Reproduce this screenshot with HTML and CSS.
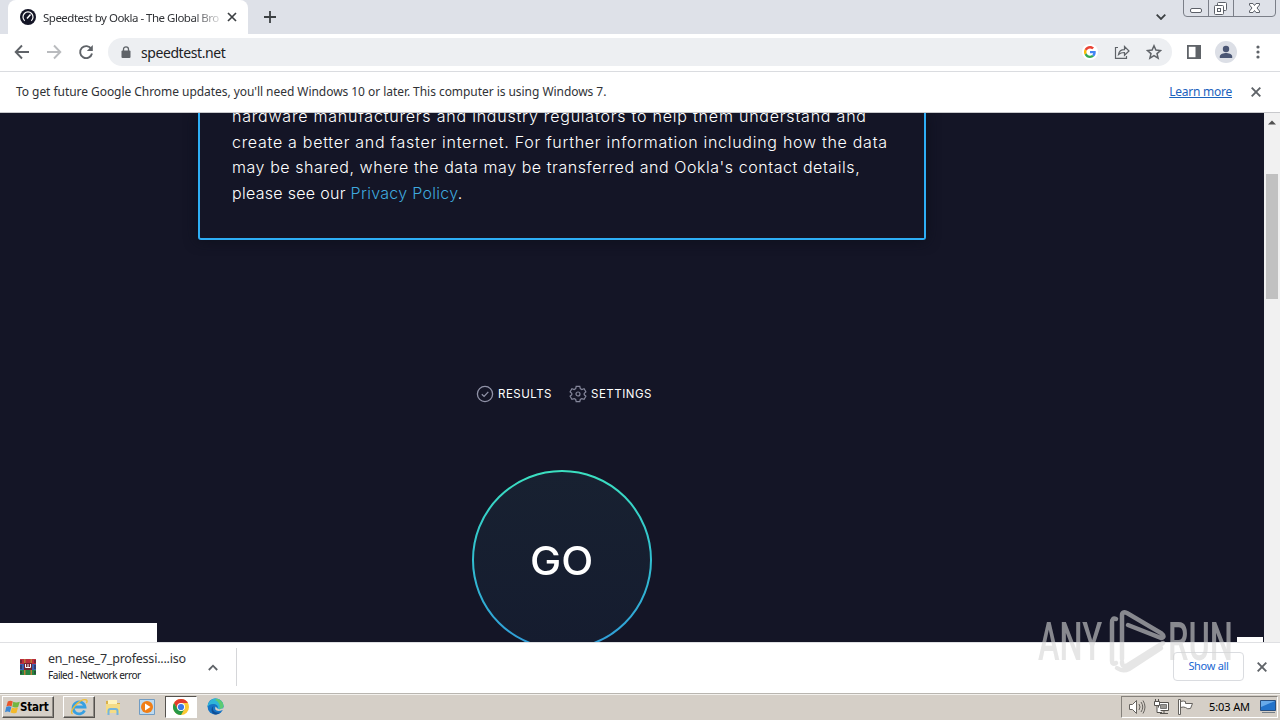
FILE: index.html
```
<!DOCTYPE html>
<html lang="en">
<head>
    <meta charset="UTF-8">
    <meta name="viewport" content="width=device-width, initial-scale=1.0">
    <title>Speedtest by Ookla</title>
    <link rel="stylesheet" href="styles.css">
</head>
<body>
    <!-- Tab strip -->
    <div class="tabstrip">
        <div class="tab">
            <svg class="favicon" width="16" height="16" viewBox="0 0 16 16">
                <circle cx="8" cy="8" r="8" fill="#141526"/>
                <path d="M4.700 11.700a5 5 0 1 1 6.600 0" fill="none" stroke="#fff" stroke-width="1.200"/>
                <path d="M7 9.500l3.500-4" stroke="#fff" stroke-width="1.500"/>
            </svg>
            <span class="tab-title">Speedtest by Ookla - The Global Bro</span>
            <svg width="10" height="10" viewBox="0 0 10 10"><path d="M1 1l8 8M9 1l-8 8" stroke="#3c4043" stroke-width="1.700"/></svg>
        </div>
        <svg class="new-tab" width="12" height="12" viewBox="0 0 12 12"><path d="M6 0v12M0 6h12" stroke="#3c4043" stroke-width="1.800"/></svg>
        <svg class="tab-search" width="10" height="6" viewBox="0 0 10 6"><path d="M.7.7L5 5 9.300.7" fill="none" stroke="#3c4043" stroke-width="1.800"/></svg>
        <div class="win-buttons">
            <svg width="97" height="17" viewBox="0 0 97 17" fill="none" stroke="#7b7f88">
                <path d="M.5 0v13q0 3.500 3.500 3.500h85q3.500 0 3.500-3.500V0M25.500 0v16.500M50.500 0v16.500"/>
                <g stroke="#5c6068">
                    <rect x="7.500" y="8.500" width="11" height="4" rx="1.500" fill="#fff"/>
                    <rect x="34.500" y="2.500" width="9" height="8" rx="1" fill="#fff"/>
                    <rect x="31.500" y="5.500" width="9" height="9" rx="1" fill="#fff"/>
                    <rect x="34.500" y="8.500" width="3" height="3"/>
                    <path d="M66.500 3.500h3.500l1.500 2 1.500-2h3.500v1.500L74 8l2.500 3v1.500H73l-1.500-2-1.500 2h-3.500V11L69 8l-2.500-3z" fill="#fff"/>
                </g>
            </svg>
        </div>
    </div>

    <!-- Toolbar -->
    <div class="toolbar">
        <svg class="nav-icon" width="16" height="16" viewBox="0 0 16 16" fill="none" stroke="#5f6368" stroke-width="1.900"><path d="M15 8H2M8 1.500L1.700 8 8 14.500"/></svg>
        <svg class="nav-icon" width="16" height="16" viewBox="0 0 16 16" fill="none" stroke="#b9bbbe" stroke-width="1.900"><path d="M1 8h13M8 1.500L14.300 8 8 14.500"/></svg>
        <svg class="nav-icon" width="16" height="16" viewBox="0 0 16 16"><path d="M13.300 5A6 6 0 1 0 14 9.500" fill="none" stroke="#5f6368" stroke-width="1.900"/><path d="M14.800 1v6H8.800z" fill="#5f6368"/></svg>
        <div class="omnibox">
            <svg width="10" height="13" viewBox="0 0 10 13"><rect x=".5" y="4.500" width="9" height="7.500" rx="1" fill="#5f6368"/><path d="M2.500 5V3.300a2.500 2.500 0 0 1 5 0V5" fill="none" stroke="#5f6368" stroke-width="1.300"/></svg>
            <span class="url">speedtest.net</span>
            <div class="omni-icons">
                <span class="google">
                    <svg width="12" height="12" viewBox="0 0 48 48">
                        <path fill="#ea4335" d="M24 9.500c3.500 0 6.700 1.200 9.200 3.600l6.900-6.900C35.900 2.400 30.500 0 24 0 14.600 0 6.500 5.400 2.600 13.200l8 6.200C12.400 13.700 17.700 9.500 24 9.500z"/>
                        <path fill="#4285f4" d="M47 24.600c0-1.600-.2-3.100-.4-4.600H24v9h12.900c-.6 3-2.200 5.500-4.700 7.200l7.700 6C44.400 38 47 31.800 47 24.600z"/>
                        <path fill="#fbbc05" d="M10.500 28.600a14.500 14.500 0 0 1 0-9.200l-8-6.200a24 24 0 0 0 0 21.600z"/>
                        <path fill="#34a853" d="M24 48c6.500 0 11.900-2.100 15.900-5.800l-7.700-6c-2.200 1.500-4.900 2.300-8.200 2.300-6.300 0-11.600-4.200-13.500-9.900l-8 6.200C6.500 42.600 14.600 48 24 48z"/>
                    </svg>
                </span>
                <svg width="16" height="16" viewBox="0 0 16 16" fill="none" stroke="#5f6368" stroke-width="1.200"><path d="M4 3.500H1.500v10.900h11V12M4.500 10.500c.5-3 2.500-4.800 6-4.800V2.500L15 7l-4.500 4.300V8.500c-2.500 0-4.500.5-6 2z"/></svg>
                <svg width="16" height="16" viewBox="0 0 16 16"><path d="M8 1.800l1.900 4.300 4.600.4-3.500 3.100 1.100 4.600L8 11.700l-4.100 2.500L5 9.600 1.500 6.500l4.600-.4z" fill="none" stroke="#5f6368" stroke-width="1.500"/></svg>
            </div>
        </div>
        <svg class="side-panel" width="14" height="14" viewBox="0 0 14 14"><rect x=".9" y=".9" width="12.200" height="12.200" fill="none" stroke="#5f6368" stroke-width="1.800"/><path d="M8.500 0H14v14H8.500z" fill="#5f6368"/></svg>
        <svg class="avatar" width="22" height="22" viewBox="0 0 22 22"><circle cx="11" cy="11" r="11" fill="#dcdfe6"/><circle cx="11" cy="8" r="3.200" fill="#4a5674"/><path d="M4.800 17v-1.500c0-2.300 4-3.400 6.200-3.400s6.200 1.100 6.200 3.400V17z" fill="#4a5674"/></svg>
        <svg width="4" height="14" viewBox="0 0 4 14" fill="#5f6368"><circle cx="2" cy="2" r="1.600"/><circle cx="2" cy="7" r="1.600"/><circle cx="2" cy="12" r="1.600"/></svg>
    </div>

    <!-- Info bar -->
    <div class="infobar">
        <span class="info-text">To get future Google Chrome updates, you'll need Windows 10 or later. This computer is using Windows 7.</span>
        <a class="learn-more">Learn more</a>
        <svg width="10" height="10" viewBox="0 0 10 10"><path d="M.7.7l8.600 8.600M9.300.7L.7 9.300" stroke="#5f6368" stroke-width="1.900"/></svg>
    </div>

    <!-- Page -->
    <div class="viewport">
        <main class="page">
            <section class="consent">
                <p>
                    <span class="line l1">hardware manufacturers and industry regulators to help them understand and</span>
                    <span class="line l2">create a better and faster internet. For further information including how the data</span>
                    <span class="line l3">may be shared, where the data may be transferred and Ookla's contact details,</span>
                    <span class="line l4">please see our <a>Privacy Policy</a>.</span>
                </p>
            </section>
            <nav class="links">
                <svg width="18" height="18" viewBox="0 0 18 18" fill="none" stroke="#9193a8" stroke-width="1.300"><circle cx="9" cy="9" r="7.600"/><path d="M5.800 9.200l2.300 2.200 4.200-4.500"/></svg>
                <span class="results">RESULTS</span>
                <svg width="18" height="18" viewBox="0 0 18 18" fill="none" stroke="#85879b" stroke-width="1.200"><path d="M7.200 1.300h3.600l.5 2.300 1.500.9 2.300-.8 1.800 3.100-1.700 1.600v1.300l1.700 1.500-1.800 3.100-2.300-.7-1.500.9-.5 2.200H7.200l-.5-2.200-1.500-.9-2.300.7-1.800-3.100 1.700-1.500V8.400L1.100 6.800l1.800-3.100 2.300.8 1.500-.9z"/><circle cx="9" cy="9" r="2"/></svg>
                <span class="settings">SETTINGS</span>
            </nav>
            <div class="go">
                <svg class="go-ring" width="180" height="180" viewBox="0 0 180 180">
                    <defs>
                        <linearGradient id="ring" x1="0" y1="0" x2="0" y2="1"><stop offset="0" stop-color="#3be0c0"/><stop offset=".5" stop-color="#31bfd0"/><stop offset="1" stop-color="#309bd8"/></linearGradient>
                        <linearGradient id="disc" x1="0" y1="0" x2="0" y2="1"><stop offset="0" stop-color="#182131"/><stop offset="1" stop-color="#151c2f"/></linearGradient>
                    </defs>
                    <circle cx="90" cy="90" r="89" fill="url(#disc)" stroke="url(#ring)" stroke-width="2"/>
                </svg>
                <span class="go-text">GO</span>
            </div>
        </main>
        <div class="scrollbar">
            <svg width="8" height="5" viewBox="0 0 8 5"><path d="M0 4.500L4 .5l4 4z" fill="#505050"/></svg>
            <div class="thumb"></div>
        </div>
        <div class="status-bubble"></div>
        <div class="corner-bubble"></div>
    </div>

    <!-- Downloads -->
    <div class="downloads">
        <svg width="16" height="16" viewBox="0 0 16 16">
            <path d="M0 0h16v5H0z" fill="#bc2e3d"/><path d="M0 5h16v6H0z" fill="#3d60b0"/><path d="M0 11h16v5H0z" fill="#278442"/>
            <path d="M1 1v3M1 6v4M1 12v3M15 1v3M15 6v4M15 12v3" stroke="#281c35"/>
            <path d="M4 0h1.500v16H4zM10.500 0H12v16h-1.500z" fill="#b87a36"/>
            <path d="M4 4h8v7H4z" fill="#752431"/><path d="M5.500 5v3.500h5V5M8 5v3.500" fill="none" stroke="#fff"/>
        </svg>
        <div class="file">
            <span class="file-name">en_nese_7_professi....iso</span>
            <span class="file-state">Failed - Network error</span>
        </div>
        <svg class="caret" width="10" height="7" viewBox="0 0 10 7"><path d="M.8 6L5 1.700 9.200 6" fill="none" stroke="#5f6368" stroke-width="1.800"/></svg>
        <div class="divider"></div>
        <div class="show-all">Show all</div>
        <svg width="10" height="10" viewBox="0 0 10 10"><path d="M.7.7l8.600 8.600M9.300.7L.7 9.300" stroke="#5f6368" stroke-width="1.900"/></svg>
    </div>

    <!-- Taskbar -->
    <div class="taskbar">
        <div class="start">
            <svg width="15" height="16" viewBox="0 0 16 16"><path d="M3 2q3-1.500 5.300.2L7 7.500Q4.500 6 1.500 7.500z" fill="#e8562b"/><path d="M8.800 2.500q3 1.500 7 0L14 8q-3.500 1.200-6.200-.2z" fill="#72b641"/><path d="M1.300 8q3-1.500 5.500 0L5.300 13.500q-2.500-1.500-5.300 0z" fill="#3d88d4"/><path d="M7.400 8.500q2.600 1.400 6.400 0L12.300 14q-3.400 1.400-6.400-.2z" fill="#f3b92b"/></svg>
            <span>Start</span>
        </div>
        <div class="task raised">
            <svg width="18" height="18" viewBox="0 0 18 18" fill="none"><path d="M14.500 12.500A6 6 0 1 1 15 9H4" stroke="#37a0e2" stroke-width="2.800"/><path d="M2.500 16C-2 13 11-.5 16.500 2c1 .6.500 2-.2 3" stroke="#edbd38" stroke-width="1.400"/></svg>
        </div>
        <div class="task">
            <svg width="18" height="18" viewBox="0 0 18 18"><path d="M2 3h5l1 2h8v10H2z" fill="#d9b04b"/><path d="M4 2h9v5H4z" fill="#fff4bd"/><path d="M2 6h14v9H2z" fill="#f5dc85"/><path d="M4.500 17v-4q0-2 2-2h5q2 0 2 2v4" fill="none" stroke="#75b5dc" stroke-width="2"/></svg>
        </div>
        <div class="task">
            <svg width="18" height="18" viewBox="0 0 18 18"><path d="M1.500 1.500h15v15h-15z" fill="#bddaf0" stroke="#719cc3"/><circle cx="9" cy="9" r="6" fill="#f07e16"/><path d="M7 5.500l5.500 3.500L7 12.500z" fill="#fff"/></svg>
        </div>
        <div class="task pressed">
            <svg width="16" height="16" viewBox="0 0 16 16"><circle cx="8" cy="8" r="8" fill="#fcc934"/><path d="M1.070 4A8 8 0 0 1 14.930 4H8L4.540 10z" fill="#e33b2e"/><path d="M1.070 4A8 8 0 0 0 8 16l3.460-6H4.540z" fill="#279847"/><circle cx="8" cy="8" r="4" fill="#fff"/><circle cx="8" cy="8" r="3.100" fill="#3c78e7"/></svg>
        </div>
        <div class="task">
            <svg width="17" height="17" viewBox="0 0 17 17"><circle cx="8.500" cy="8.500" r="8" fill="#1674c5"/><path d="M.6 8C1.500 3 5 .5 8.500.5c5 0 8 4 8 7.500 0 3-4 4-6 2.500C12 8 9 6 6 6 3.500 6 1.500 7 .6 9z" fill="#2fb5d8"/><path d="M10 .8c4 .7 6.500 4 6.500 7.200 0 2-2 3-4 3 1-3 0-7-4.500-9z" fill="#5dcb72"/><path d="M6.500 8c-2 4 1 7.500 7 6.500-1.500 1.500-4 2-5.500 2C4 15.500 3.500 10 6.500 8z" fill="#104e95"/><path d="M8.500 8.500q-1.500 4 3 4.500 2 0 4-1l1 1v-3q-4 2-6 .5z" fill="#d5cfc7"/></svg>
        </div>
        <div class="tray">
            <svg width="18" height="16" viewBox="0 0 18 16" fill="#fff" stroke="#65625e"><path d="M1.500 5.500h3l4-4v13l-4-4h-3z"/><path d="M11 5q2 3 0 6M13 3q3.500 5 0 10M15 1.500q4 6.500 0 13" fill="none"/></svg>
            <svg width="17" height="16" viewBox="0 0 17 16" fill="#fff" stroke="#55524e"><path d="M5.500 3.500h10v8h-10zM7 14.500h8M11 11.500v3"/><path d="M7.500 5.500h6v4h-6z" fill="#9a9894" stroke="#777"/><path d="M1.500 2.500h5v4h-5zM2.500 0v2M5.500 0v2M4 6.500v7h5"/></svg>
            <svg width="17" height="16" viewBox="0 0 17 16" fill="#fff" stroke="#65625e"><path d="M1.500.5h2v15h-2zM3.500 2.500q3-1 5 0v2h7l-2 5q-3 1-5-1-2-1-5 0z"/></svg>
            <span class="clock">5:03 AM</span>
            <svg width="17" height="15" viewBox="0 0 17 15"><path d="M.5 1.500h15v10H.5z" fill="#2373ca" stroke="#284f80"/><path d="M1 2h14L1 8z" fill="#68aae9"/><path d="M2 13.500h13" stroke="#747d86"/></svg>
        </div>
    </div>

    <!-- Recorder watermark, lies over the page and the shelf -->
    <svg class="watermark" width="200" height="70" viewBox="0 0 200 70">
        <g class="watermark-text">
            <text x="3" y="55" textLength="64" lengthAdjust="spacingAndGlyphs">ANY</text>
            <text x="133" y="55" textLength="65" lengthAdjust="spacingAndGlyphs">RUN</text>
        </g>
        <path d="M81 14q-4-2-4 4v38q0 4 4 2M87 54V10q0-4 5-2l34 20q5 4 0 5L93 20M128 38L93 60q-6 3-6-3M126 43L94 64q-6 3-12-1" fill="none" stroke="#d6d6d6" stroke-width="4.500" stroke-linecap="round"/>
    </svg>
</body>
</html>
```
FILE: styles.css
```
* {
    box-sizing: border-box;
}
body {
    margin: 0;
    width: 1280px;
    height: 720px;
    overflow: hidden;
    display: flex;
    flex-direction: column;
    position: relative;
    font-family: "Noto Sans", "Open Sans", sans-serif;
    font-size: 12px;
    color: #303236;
    background-color: #fff;
}
svg {
    display: block;
    flex-shrink: 0;
}
span, a {
    white-space: nowrap;
}

/* tab strip */
.tabstrip {
    height: 34px;
    flex-shrink: 0;
    display: flex;
    align-items: center;
    padding-left: 8px;
    background-color: #dee1e8;
}
.tab {
    width: 240px;
    height: 34px;
    display: flex;
    align-items: center;
    padding: 0 11px 0 12px;
    background-color: #fff;
    border-radius: 8px 8px 0 0;
}
.tab-title {
    width: 176px;
    margin: 0 8px 0 7px;
    font-size: 11.5px;
    letter-spacing: -0.5px;
    -webkit-mask-image: linear-gradient(to right, #000 150px, transparent 182px);
    mask-image: linear-gradient(to right, #000 150px, transparent 182px);
}
.new-tab {
    margin-left: 16px;
}
.tab-search {
    margin-left: auto;
}
.win-buttons {
    align-self: flex-start;
    margin-left: 17px;
}

/* toolbar */
.toolbar {
    height: 38px;
    flex-shrink: 0;
    display: flex;
    align-items: center;
    padding: 0 20px 1px 14px;
    border-bottom: 1px solid #dadce0;
}
.nav-icon {
    margin-right: 16px;
}
.omnibox {
    width: 1064px;
    height: 28px;
    margin-left: -2px;
    padding: 0 10px 0 13px;
    display: flex;
    align-items: center;
    border-radius: 14px;
    background-color: #edeff2;
}
.url {
    margin-left: 10px;
    font-size: 14px;
    letter-spacing: -0.42px;
    color: #202124;
}
.omni-icons {
    display: flex;
    align-items: center;
    gap: 16px;
    margin-left: auto;
}
.google {
    padding: 2px;
    border-radius: 50%;
    background-color: #fff;
}
.side-panel {
    margin-left: 15px;
}
.avatar {
    margin: 0 19px 0 14px;
}

/* info bar */
.infobar {
    height: 41px;
    flex-shrink: 0;
    display: flex;
    align-items: center;
    padding: 0 19px 1px 16px;
    border-bottom: 1px solid #c8c9cc;
}
.info-text {
    letter-spacing: -0.05px;
}
.learn-more {
    margin: 0 19px 0 auto;
    color: #1b62bd;
    letter-spacing: -0.25px;
    text-decoration: underline;
}

/* web page */
.viewport {
    height: 529px;
    flex-shrink: 0;
    display: flex;
    position: relative;
    overflow: hidden;
}
.page {
    width: 1264px;
    padding-left: 198px;
    background-color: #141526;
    color: #fff;
    font-family: Inter, "Open Sans", sans-serif;
}
.consent {
    width: 728px;
    height: 127px;
    padding: 0 32px 32px;
    display: flex;
    align-items: flex-end;
    overflow: hidden;
    border: 2px solid #2eaef5;
    border-top: none;
    border-radius: 0 0 3px 3px;
    box-shadow: 0 0 14px #0c0f1b;
}
.consent p {
    margin: 0;
    font-size: 16px;
    font-weight: 300;
    line-height: 25.4px;
}
.line {
    display: block;
}
.l1 {
    letter-spacing: 0.79px;
}
.l2 {
    letter-spacing: 0.72px;
}
.l3 {
    letter-spacing: 0.56px;
}
.l4 {
    letter-spacing: 0.3px;
}
.consent a {
    color: #3fa9de;
}
.links {
    width: 728px;
    height: 20px;
    margin-top: 144px;
    padding-left: 278px;
    display: flex;
    align-items: center;
    font-size: 11.5px;
    letter-spacing: 0.5px;
}
.links span {
    margin-left: 4px;
}
.results {
    width: 71px;
}
.go {
    width: 728px;
    margin-top: 66px;
    display: grid;
    place-items: center;
}
.go-ring, .go-text {
    grid-area: 1 / 1;
}
.go-text {
    font-size: 39px;
    font-weight: 500;
    transform: scaleX(1.07);
}
.scrollbar {
    width: 16px;
    padding-top: 7px;
    display: flex;
    flex-direction: column;
    align-items: center;
    background-color: #f1f1f1;
}
.thumb {
    width: 12px;
    height: 125px;
    margin-top: 49px;
    background-color: #c1c1c1;
}
.status-bubble {
    position: absolute;
    left: 0;
    bottom: 0;
    width: 157px;
    height: 19px;
    background-color: #fff;
}
.corner-bubble {
    position: absolute;
    right: 17px;
    bottom: 0;
    width: 26px;
    height: 5px;
    background-color: #fff;
}

/* download shelf */
.downloads {
    height: 51px;
    flex-shrink: 0;
    display: flex;
    align-items: center;
    padding: 0 13px 2px 20px;
    border-top: 1px solid #dfe0e3;
}
.file {
    width: 138px;
    margin: -1px 0 0 12px;
    display: flex;
    flex-direction: column;
}
.file-name {
    line-height: 17px;
    font-size: 12.5px;
    letter-spacing: -0.22px;
}
.file-state {
    line-height: 16px;
    font-size: 10px;
    letter-spacing: -0.46px;
    color: #202124;
}
.caret {
    margin-left: 22px;
}
.divider {
    width: 1px;
    height: 38px;
    margin-left: 18px;
    background-color: #d5d6d9;
}
.show-all {
    width: 71px;
    height: 29px;
    margin: -1px 13px 0 auto;
    border: 1px solid #dadce0;
    border-radius: 4px;
    color: #1967d2;
    font-size: 11px;
    letter-spacing: -0.3px;
    line-height: 26px;
    text-align: center;
}

/* taskbar */
.taskbar {
    height: 27px;
    flex-shrink: 0;
    display: flex;
    align-items: center;
    padding: 1px 2px 2px;
    border-top: 1px solid #b9b6b0;
    background-color: #d5cfc7;
    box-shadow: inset 0 1px #f3f1ed;
}
.start, .raised {
    border: 1px solid;
    border-color: #fff #55524e #55524e #fff;
    box-shadow: inset -1px -1px #8f8b85;
}
.start {
    width: 52px;
    height: 22px;
    padding-left: 2px;
    display: flex;
    align-items: center;
    color: #000;
    font-family: "DejaVu Sans Condensed", "DejaVu Sans", sans-serif;
    font-size: 11.5px;
    font-weight: bold;
    letter-spacing: -0.2px;
    margin-right: 9px;
}
.task {
    width: 32px;
    height: 22px;
    margin-right: 2px;
    display: flex;
    align-items: center;
    justify-content: center;
}
.pressed {
    border: 1px solid;
    border-color: #55524e #fff #fff #55524e;
    background-color: #fff;
}
.tray {
    width: 157px;
    height: 22px;
    margin-left: auto;
    padding: 0 1px 0 6px;
    display: flex;
    align-items: center;
    gap: 7px;
    border: 1px solid;
    border-color: #85817b #fff #fff #85817b;
    color: #000;
    font-size: 11px;
}
.clock {
    margin: 0 3px 0 8px;
    letter-spacing: -0.1px;
}

.watermark {
    position: absolute;
    left: 1035px;
    top: 605px;
    opacity: 0.6;
}
.watermark-text {
    fill: #d6d6d6;
    font-family: Roboto, sans-serif;
    font-size: 53px;
    font-weight: 500;
}
```
